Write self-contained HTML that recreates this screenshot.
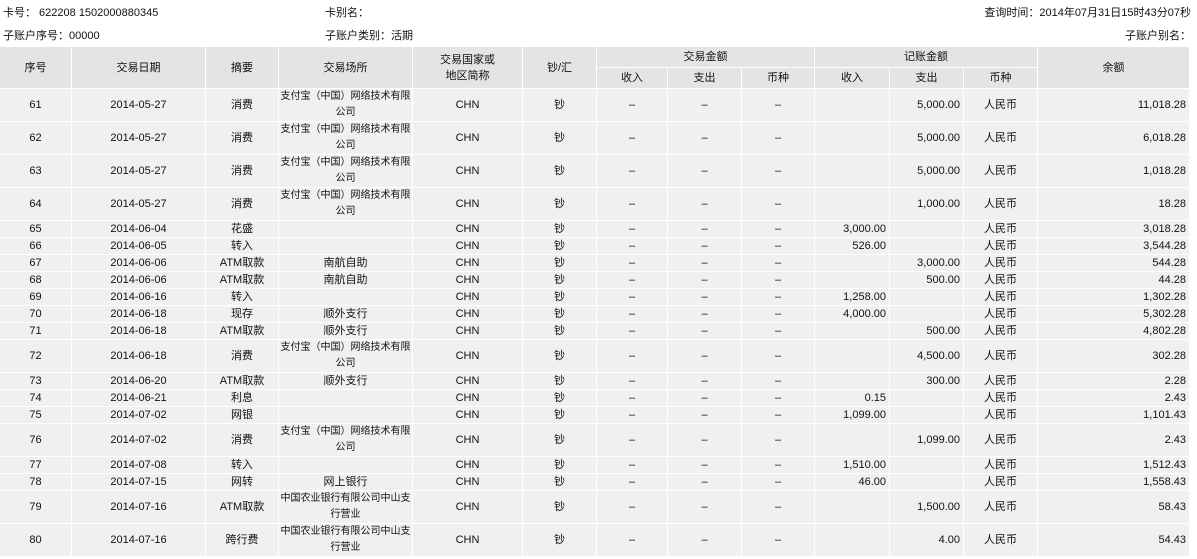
<!DOCTYPE html>
<html><head><meta charset="utf-8"><style>
*{margin:0;padding:0;box-sizing:border-box}
body{width:1197px;height:559px;overflow:hidden;background:#fff;font-family:"Liberation Sans","Noto Sans CJK SC","WenQuanYi Zen Hei",sans-serif;font-size:11px;color:#111}
.info{position:absolute;font-size:11px;white-space:nowrap}
table{position:absolute;left:0;top:47px;border-collapse:separate;border-spacing:0;table-layout:fixed;width:1190px}
td,th{border-right:1px solid #fff;border-bottom:1px solid #fff;text-align:center;font-weight:normal;padding:0;line-height:16px;overflow:hidden;white-space:nowrap}
th{background:#e4e4e4;height:21px}
td{background:#f0f0f0}
tr.d td{height:33px}
tr.s td{height:17px}
td.r{text-align:right;padding-right:3px}
td.w{white-space:normal;font-size:10px;word-break:break-all}
</style></head><body>
<div class="info" style="left:3px;top:4px">卡号： 622208 1502000880345</div>
<div class="info" style="left:325px;top:4px">卡别名：</div>
<div class="info" style="right:6px;top:4px">查询时间：2014年07月31日15时43分07秒</div>
<div class="info" style="left:3px;top:27px">子账户序号：00000</div>
<div class="info" style="left:325px;top:27px">子账户类别：活期</div>
<div class="info" style="right:6px;top:27px">子账户别名：</div>
<table>
<colgroup><col style="width:72px"><col style="width:134px"><col style="width:73px"><col style="width:134px"><col style="width:110px"><col style="width:74px"><col style="width:71px"><col style="width:74px"><col style="width:73px"><col style="width:75px"><col style="width:74px"><col style="width:74px"><col style="width:152px"></colgroup>
<tr><th rowspan="2">序号</th><th rowspan="2">交易日期</th><th rowspan="2">摘要</th><th rowspan="2">交易场所</th><th rowspan="2">交易国家或<br>地区简称</th><th rowspan="2">钞/汇</th><th colspan="3">交易金额</th><th colspan="3">记账金额</th><th rowspan="2">余额</th></tr>
<tr><th>收入</th><th>支出</th><th>币种</th><th>收入</th><th>支出</th><th>币种</th></tr>
<tr class="d"><td>61</td><td>2014-05-27</td><td>消费</td><td class="w">支付宝（中国）网络技术有限<br>公司</td><td>CHN</td><td>钞</td><td>–</td><td>–</td><td>–</td><td class="r"></td><td class="r">5,000.00</td><td>人民币</td><td class="r">11,018.28</td></tr>
<tr class="d"><td>62</td><td>2014-05-27</td><td>消费</td><td class="w">支付宝（中国）网络技术有限<br>公司</td><td>CHN</td><td>钞</td><td>–</td><td>–</td><td>–</td><td class="r"></td><td class="r">5,000.00</td><td>人民币</td><td class="r">6,018.28</td></tr>
<tr class="d"><td>63</td><td>2014-05-27</td><td>消费</td><td class="w">支付宝（中国）网络技术有限<br>公司</td><td>CHN</td><td>钞</td><td>–</td><td>–</td><td>–</td><td class="r"></td><td class="r">5,000.00</td><td>人民币</td><td class="r">1,018.28</td></tr>
<tr class="d"><td>64</td><td>2014-05-27</td><td>消费</td><td class="w">支付宝（中国）网络技术有限<br>公司</td><td>CHN</td><td>钞</td><td>–</td><td>–</td><td>–</td><td class="r"></td><td class="r">1,000.00</td><td>人民币</td><td class="r">18.28</td></tr>
<tr class="s"><td>65</td><td>2014-06-04</td><td>花盛</td><td></td><td>CHN</td><td>钞</td><td>–</td><td>–</td><td>–</td><td class="r">3,000.00</td><td class="r"></td><td>人民币</td><td class="r">3,018.28</td></tr>
<tr class="s"><td>66</td><td>2014-06-05</td><td>转入</td><td></td><td>CHN</td><td>钞</td><td>–</td><td>–</td><td>–</td><td class="r">526.00</td><td class="r"></td><td>人民币</td><td class="r">3,544.28</td></tr>
<tr class="s"><td>67</td><td>2014-06-06</td><td>ATM取款</td><td>南航自助</td><td>CHN</td><td>钞</td><td>–</td><td>–</td><td>–</td><td class="r"></td><td class="r">3,000.00</td><td>人民币</td><td class="r">544.28</td></tr>
<tr class="s"><td>68</td><td>2014-06-06</td><td>ATM取款</td><td>南航自助</td><td>CHN</td><td>钞</td><td>–</td><td>–</td><td>–</td><td class="r"></td><td class="r">500.00</td><td>人民币</td><td class="r">44.28</td></tr>
<tr class="s"><td>69</td><td>2014-06-16</td><td>转入</td><td></td><td>CHN</td><td>钞</td><td>–</td><td>–</td><td>–</td><td class="r">1,258.00</td><td class="r"></td><td>人民币</td><td class="r">1,302.28</td></tr>
<tr class="s"><td>70</td><td>2014-06-18</td><td>现存</td><td>顺外支行</td><td>CHN</td><td>钞</td><td>–</td><td>–</td><td>–</td><td class="r">4,000.00</td><td class="r"></td><td>人民币</td><td class="r">5,302.28</td></tr>
<tr class="s"><td>71</td><td>2014-06-18</td><td>ATM取款</td><td>顺外支行</td><td>CHN</td><td>钞</td><td>–</td><td>–</td><td>–</td><td class="r"></td><td class="r">500.00</td><td>人民币</td><td class="r">4,802.28</td></tr>
<tr class="d"><td>72</td><td>2014-06-18</td><td>消费</td><td class="w">支付宝（中国）网络技术有限<br>公司</td><td>CHN</td><td>钞</td><td>–</td><td>–</td><td>–</td><td class="r"></td><td class="r">4,500.00</td><td>人民币</td><td class="r">302.28</td></tr>
<tr class="s"><td>73</td><td>2014-06-20</td><td>ATM取款</td><td>顺外支行</td><td>CHN</td><td>钞</td><td>–</td><td>–</td><td>–</td><td class="r"></td><td class="r">300.00</td><td>人民币</td><td class="r">2.28</td></tr>
<tr class="s"><td>74</td><td>2014-06-21</td><td>利息</td><td></td><td>CHN</td><td>钞</td><td>–</td><td>–</td><td>–</td><td class="r">0.15</td><td class="r"></td><td>人民币</td><td class="r">2.43</td></tr>
<tr class="s"><td>75</td><td>2014-07-02</td><td>网银</td><td></td><td>CHN</td><td>钞</td><td>–</td><td>–</td><td>–</td><td class="r">1,099.00</td><td class="r"></td><td>人民币</td><td class="r">1,101.43</td></tr>
<tr class="d"><td>76</td><td>2014-07-02</td><td>消费</td><td class="w">支付宝（中国）网络技术有限<br>公司</td><td>CHN</td><td>钞</td><td>–</td><td>–</td><td>–</td><td class="r"></td><td class="r">1,099.00</td><td>人民币</td><td class="r">2.43</td></tr>
<tr class="s"><td>77</td><td>2014-07-08</td><td>转入</td><td></td><td>CHN</td><td>钞</td><td>–</td><td>–</td><td>–</td><td class="r">1,510.00</td><td class="r"></td><td>人民币</td><td class="r">1,512.43</td></tr>
<tr class="s"><td>78</td><td>2014-07-15</td><td>网转</td><td>网上银行</td><td>CHN</td><td>钞</td><td>–</td><td>–</td><td>–</td><td class="r">46.00</td><td class="r"></td><td>人民币</td><td class="r">1,558.43</td></tr>
<tr class="d"><td>79</td><td>2014-07-16</td><td>ATM取款</td><td class="w">中国农业银行有限公司中山支<br>行营业</td><td>CHN</td><td>钞</td><td>–</td><td>–</td><td>–</td><td class="r"></td><td class="r">1,500.00</td><td>人民币</td><td class="r">58.43</td></tr>
<tr class="d"><td>80</td><td>2014-07-16</td><td>跨行费</td><td class="w">中国农业银行有限公司中山支<br>行营业</td><td>CHN</td><td>钞</td><td>–</td><td>–</td><td>–</td><td class="r"></td><td class="r">4.00</td><td>人民币</td><td class="r">54.43</td></tr>
</table>
</body></html>
